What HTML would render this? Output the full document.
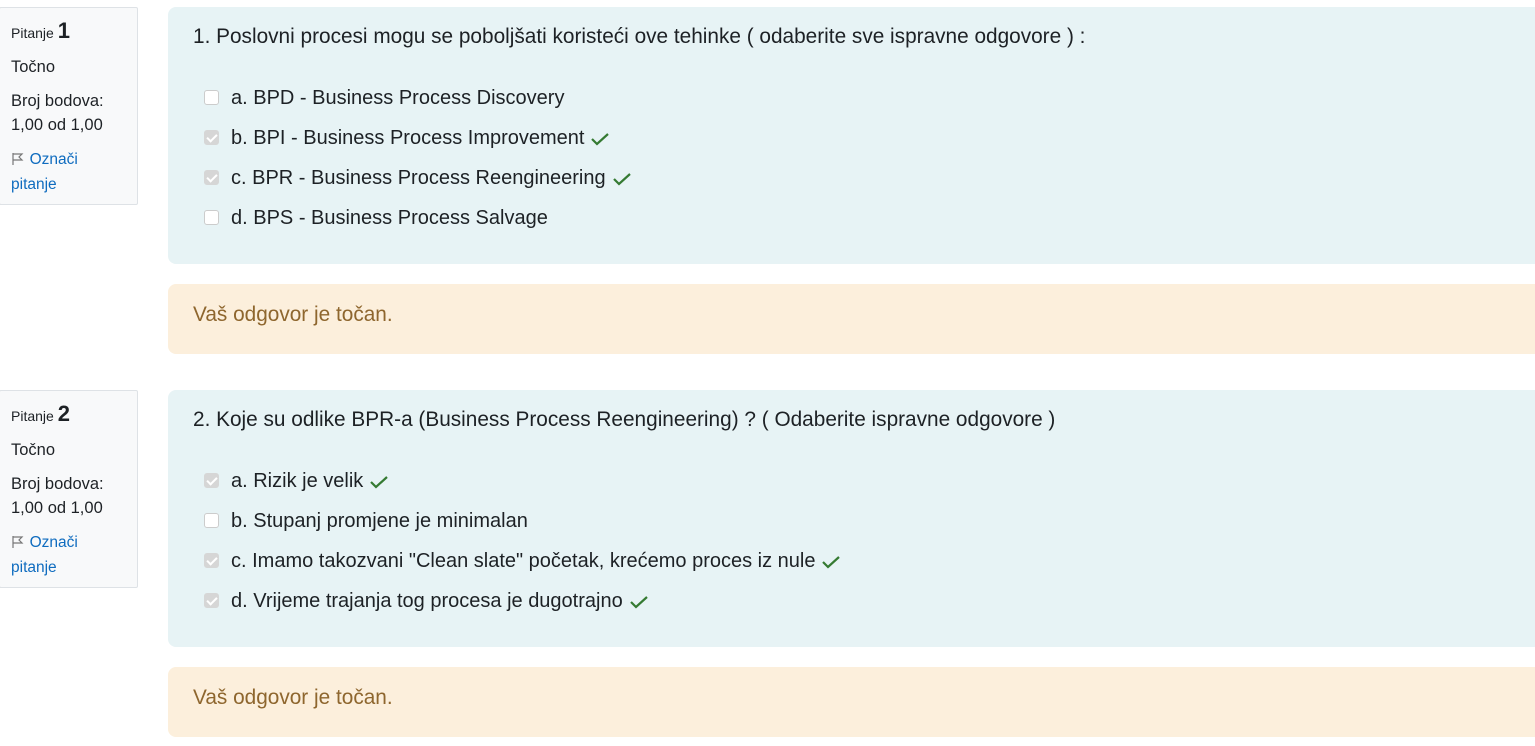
<!DOCTYPE html>
<html><head><meta charset="utf-8"><style>
*{box-sizing:border-box;margin:0;padding:0}
body{width:1535px;height:746px;background:#fff;font-family:"Liberation Sans",sans-serif;color:#1d2125;position:relative;overflow:hidden}
.info{position:absolute;left:-1px;width:139px;height:198px;background:#f8f9fa;border:1px solid #dee2e6;border-radius:2px;padding:11px 0 0 11px;font-size:16.5px;line-height:24px}
.info .n{font-size:14px}
.info .n b{font-size:22px;font-weight:bold}
.info p{margin-bottom:10px}
.info a{color:#0f6cbf;text-decoration:none;font-size:15.5px}
.form{position:absolute;left:168px;width:1380px;height:257px;background:#e7f3f5;border-radius:8px}
.fb{position:absolute;left:168px;width:1380px;height:70px;background:#fcefdc;border-radius:8px;color:#8e662e;font-size:20.8px;padding:19px 0 0 25px}
.q{position:absolute;left:25px;top:18px;font-size:20.8px;white-space:nowrap}
.opt{position:absolute;left:36px;font-size:20px;white-space:nowrap;height:24px;line-height:24px}
.cb{position:absolute;left:0;top:4px;width:15px;height:15px;border-radius:3px;background:#fff;border:1px solid #ccc}
.cb.c{background:#d6d6d6;border-color:#d6d6d6}
.cb.c:after{content:"";position:absolute;left:4px;top:1px;width:4px;height:8px;border:solid #fff;border-width:0 2px 2px 0;transform:rotate(45deg)}
.opt span{margin-left:27px}
.ok{display:inline-block;margin-left:6px;vertical-align:middle}
</style></head><body>

<div class="info" style="top:7px">
<p class="n">Pitanje <b>1</b></p>
<p>Točno</p>
<p>Broj bodova:<br>1,00 od 1,00</p>
<p><svg width="14" height="13" viewBox="0 0 14 13" style="vertical-align:-1px"><path d="M2 1v12M2 2h9l-3 3 3 3H2" fill="none" stroke="#777" stroke-width="1.2"/></svg> <a>Označi<br>pitanje</a></p>
</div>
<div class="form" style="top:7px">
<div class="q">1. Poslovni procesi mogu se poboljšati koristeći ove tehinke ( odaberite sve ispravne odgovore ) :</div>
<div class="opt" style="top:79px"><i class="cb"></i><span>a. BPD - Business Process Discovery</span></div>
<div class="opt" style="top:119px"><i class="cb c"></i><span>b. BPI - Business Process Improvement</span><svg class="ok" width="20" height="14" viewBox="0 0 20 14"><path d="M2 7l5 5L18 2" fill="none" stroke="#357a32" stroke-width="2.2"/></svg></div>
<div class="opt" style="top:159px"><i class="cb c"></i><span>c. BPR - Business Process Reengineering</span><svg class="ok" width="20" height="14" viewBox="0 0 20 14"><path d="M2 7l5 5L18 2" fill="none" stroke="#357a32" stroke-width="2.2"/></svg></div>
<div class="opt" style="top:199px"><i class="cb"></i><span>d. BPS - Business Process Salvage</span></div>
</div>
<div class="fb" style="top:284px">Vaš odgovor je točan.</div>

<div class="info" style="top:390px">
<p class="n">Pitanje <b>2</b></p>
<p>Točno</p>
<p>Broj bodova:<br>1,00 od 1,00</p>
<p><svg width="14" height="13" viewBox="0 0 14 13" style="vertical-align:-1px"><path d="M2 1v12M2 2h9l-3 3 3 3H2" fill="none" stroke="#777" stroke-width="1.2"/></svg> <a>Označi<br>pitanje</a></p>
</div>
<div class="form" style="top:390px">
<div class="q">2. Koje su odlike BPR-a (Business Process Reengineering) ? ( Odaberite ispravne odgovore )</div>
<div class="opt" style="top:79px"><i class="cb c"></i><span>a. Rizik je velik</span><svg class="ok" width="20" height="14" viewBox="0 0 20 14"><path d="M2 7l5 5L18 2" fill="none" stroke="#357a32" stroke-width="2.2"/></svg></div>
<div class="opt" style="top:119px"><i class="cb"></i><span>b. Stupanj promjene je minimalan</span></div>
<div class="opt" style="top:159px"><i class="cb c"></i><span>c. Imamo takozvani "Clean slate" početak, krećemo proces iz nule</span><svg class="ok" width="20" height="14" viewBox="0 0 20 14"><path d="M2 7l5 5L18 2" fill="none" stroke="#357a32" stroke-width="2.2"/></svg></div>
<div class="opt" style="top:199px"><i class="cb c"></i><span>d. Vrijeme trajanja tog procesa je dugotrajno</span><svg class="ok" width="20" height="14" viewBox="0 0 20 14"><path d="M2 7l5 5L18 2" fill="none" stroke="#357a32" stroke-width="2.2"/></svg></div>
</div>
<div class="fb" style="top:667px">Vaš odgovor je točan.</div>
</body></html>
